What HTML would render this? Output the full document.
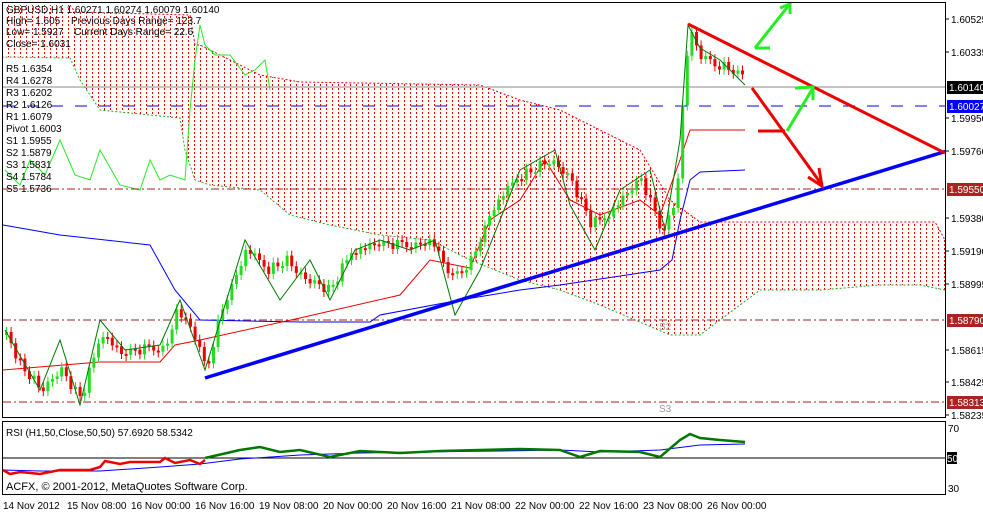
<!DOCTYPE html>
<html><head><meta charset="utf-8"><style>
html,body{margin:0;padding:0;background:#fff;width:983px;height:512px;overflow:hidden}
svg{display:block;font-family:"Liberation Sans",sans-serif}
</style></head><body>
<svg id="s" width="983" height="512" viewBox="0 0 983 512" xmlns="http://www.w3.org/2000/svg">
<defs>
<pattern id="dots" width="6" height="4" patternUnits="userSpaceOnUse"><rect x="2" y="0" width="1" height="2" fill="#e00"/></pattern>
<clipPath id="mc"><rect x="3" y="3" width="942" height="414"/></clipPath>
</defs>
<rect width="983" height="512" fill="#fff"/>
<g clip-path="url(#mc)">
<polygon fill="url(#dots)" points="0,5 70,5 75,12 190,15 195,45 200,45 260,75 300,82 480,85 520,100 560,110 600,130 640,150 670,200 700,222 935,222 945,240 945,290 920,285 880,285 820,290 760,290 700,335 670,335 600,305 560,290 520,280 470,260 430,240 380,235 330,225 290,215 260,190 210,185 195,180 185,150 180,118 100,110 80,80 70,58 0,57"/>
<polyline fill="none" stroke="#e00" stroke-width="1" stroke-dasharray="2,2" points="70,5 75,12 190,15 195,45 200,45 260,75 300,82 480,85 520,100 560,110 600,130 640,150 670,200 700,222 935,222 945,240"/>
<polyline fill="none" stroke="#2a2" stroke-width="1" stroke-dasharray="2,2" points="945,290 920,285 880,285 820,290 760,290 700,335 670,335 600,305 560,290 520,280 470,260 430,240 380,235 330,225 290,215 260,190 210,185 195,180 185,150 180,118 100,110 80,80 70,58 0,57"/>
<polyline fill="none" stroke="#2e2" stroke-width="1" points="5,170 20,185 30,160 45,175 60,140 75,175 90,180 100,150 120,185 140,190 150,160 160,180 170,175 185,180 190,110 195,60 200,25 205,45 215,55 230,55 245,75 255,70 265,60 270,90"/>
<line x1="3" y1="87" x2="945" y2="87" stroke="#888"/>
<line x1="3" y1="106" x2="945" y2="106" stroke="#00f" stroke-dasharray="12,12"/>
<line x1="3" y1="189" x2="945" y2="189" stroke="#a22" stroke-dasharray="8,3,2,3"/>
<line x1="3" y1="320" x2="945" y2="320" stroke="#a22" stroke-dasharray="8,3,2,3"/>
<line x1="3" y1="402" x2="945" y2="402" stroke="#a22" stroke-dasharray="8,3,2,3"/>
<polyline fill="none" stroke="#00f" stroke-width="1" points="3,225 60,235 150,245 175,290 200,320 300,322 370,322 380,315 460,300 520,290 560,285 660,270 672,260 680,220 690,180 700,172 745,170"/>
<polyline fill="none" stroke="#e00" stroke-width="1" points="3,370 100,362 160,362 175,345 200,340 300,318 400,295 430,260 470,268 490,220 520,200 545,160 570,200 600,215 640,200 660,215 680,160 690,130 745,130"/>
<g id="cand"></g>
<polyline fill="none" stroke="#070" stroke-width="1" points="5,330 40,390 60,340 80,405 100,320 125,350 160,345 180,300 205,370 245,240 280,300 310,260 330,300 355,250 380,240 410,250 435,240 455,315 480,270 520,170 555,150 570,205 595,250 620,190 650,170 665,230 680,140 688,25 700,48 720,60 745,85"/>
<line x1="205" y1="378" x2="960" y2="147" stroke="#00f" stroke-width="3.5"/>
<g stroke="#e00" stroke-width="3" fill="none">
<line x1="688" y1="24" x2="945" y2="153"/>
<polyline points="752,88 822,185"/><polyline points="808,177 822,186 819,168"/>
<line x1="758" y1="131" x2="785" y2="131"/>
</g>
<g stroke="#2e2" stroke-width="3" fill="none">
<polyline points="755,48 789,5"/><polyline points="780,8 790,4 790,14"/><line x1="755" y1="48" x2="770" y2="48"/>
<polyline points="787,131 813,88"/><polyline points="795,88 813,87 813,100"/>
</g>
<text x="659" y="330" font-size="10" fill="#999">S2</text>
<text x="659" y="412" font-size="10" fill="#999">S3</text>
</g>
<rect x="2.5" y="2.5" width="943" height="415" fill="none" stroke="#000"/>
<g font-size="10" fill="#000">
<text x="6" y="13">GBPUSD,H1  1.60271 1.60274 1.60079 1.60140</text>
<text x="6" y="24">High= 1.605</text><text x="71" y="24">Previous Days Range= 123.7</text>
<text x="6" y="35">Low= 1.5927</text><text x="74" y="35">Current Days Range= 22.6</text>
<text x="6" y="47">Close= 1.6031</text>
<text x="6" y="72">R5 1.6354</text><text x="6" y="84">R4 1.6278</text><text x="6" y="96">R3 1.6202</text>
<text x="6" y="108">R2 1.6126</text><text x="6" y="120">R1 1.6079</text><text x="6" y="132">Pivot 1.6003</text>
<text x="6" y="144">S1 1.5955</text><text x="6" y="156">S2 1.5879</text><text x="6" y="168">S3 1.5831</text>
<text x="6" y="180">S4 1.5784</text><text x="6" y="192">S5 1.5736</text>
</g>
<g font-size="10" fill="#000">
<g stroke="#000"><line x1="946" y1="19" x2="949" y2="19"/><line x1="946" y1="52" x2="949" y2="52"/><line x1="946" y1="118" x2="949" y2="118"/><line x1="946" y1="151" x2="949" y2="151"/><line x1="946" y1="218" x2="949" y2="218"/><line x1="946" y1="251" x2="949" y2="251"/><line x1="946" y1="284" x2="949" y2="284"/><line x1="946" y1="350" x2="949" y2="350"/><line x1="946" y1="382" x2="949" y2="382"/><line x1="946" y1="415" x2="949" y2="415"/></g>
<text x="951" y="23">1.60525</text><text x="951" y="56">1.60335</text><text x="951" y="122">1.59950</text><text x="951" y="155">1.59760</text>
<text x="951" y="222">1.59380</text><text x="951" y="255">1.59190</text><text x="951" y="288">1.58995</text><text x="951" y="354">1.58615</text>
<text x="951" y="386">1.58425</text><text x="951" y="419">1.58235</text>
<rect x="947" y="81" width="36" height="13" fill="#000"/><text x="949" y="91" fill="#fff">1.60140</text>
<rect x="947" y="100" width="36" height="13" fill="#00f"/><text x="949" y="110" fill="#fff">1.60027</text>
<rect x="947" y="183" width="36" height="13" fill="#a22"/><text x="949" y="193" fill="#fff">1.59550</text>
<rect x="947" y="314" width="36" height="13" fill="#a22"/><text x="949" y="324" fill="#fff">1.58790</text>
<rect x="947" y="396" width="36" height="13" fill="#a22"/><text x="949" y="406" fill="#fff">1.58313</text>
</g>
<rect x="2.5" y="421.5" width="943" height="73" fill="none" stroke="#000"/>
<line x1="3" y1="458" x2="945" y2="458" stroke="#000"/>
<text x="6" y="436" font-size="10">RSI (H1,50,Close,50,50) 57.6920 58.5342</text>
<text x="6" y="490" font-size="11">ACFX, © 2001-2012, MetaQuotes Software Corp.</text>
<polyline fill="none" stroke="#00f" points="3,470 40,471 100,471 160,467 200,464 240,459 300,455 360,453 420,452 500,451 560,450 600,452 660,450 700,445 745,444"/>
<polyline fill="none" stroke="#e00" stroke-width="2.5" points="3,470 10,474 20,472 40,474 60,470 90,470 100,467 105,461 120,464 130,462 160,462 165,458 175,463 190,460 200,464 205,460"/>
<polyline fill="none" stroke="#070" stroke-width="2.5" points="205,458 240,450 260,447 280,452 300,450 330,457 360,451 400,453 440,451 480,450 520,449 560,450 580,457 600,451 640,452 660,457 680,440 690,434 700,438 720,440 745,442"/>
<g font-size="10"><text x="948" y="432">70</text><rect x="947" y="452" width="10" height="12" fill="#000"/><text x="947" y="462" fill="#fff">50</text><text x="948" y="492">30</text></g>
<g font-size="10" fill="#000">
<text x="3" y="509">14 Nov 2012</text><text x="67" y="509">15 Nov 08:00</text><text x="131" y="509">16 Nov 00:00</text>
<text x="195" y="509">16 Nov 16:00</text><text x="259" y="509">19 Nov 08:00</text><text x="323" y="509">20 Nov 00:00</text>
<text x="387" y="509">20 Nov 16:00</text><text x="451" y="509">21 Nov 08:00</text><text x="515" y="509">22 Nov 00:00</text>
<text x="579" y="509">22 Nov 16:00</text><text x="643" y="509">23 Nov 08:00</text><text x="707" y="509">26 Nov 00:00</text>
</g>
</svg>
<script>
(function(){
var pts=[[5,335],[20,365],[40,390],[60,370],[80,400],[100,330],[120,355],[140,350],[165,345],[175,310],[190,330],[205,370],[220,310],[245,250],[265,270],[285,260],[305,280],[330,290],[350,250],[375,245],[400,245],[430,240],[450,280],[470,260],[490,210],[520,175],[550,160],[570,180],[590,225],[610,210],[640,180],[660,230],[675,200],[680,120],[688,30],[700,60],[720,65],[745,75]];
var g=document.getElementById('cand'),h='',prev=null;
function yAt(x){for(var i=0;i<pts.length-1;i++){if(x>=pts[i][0]&&x<=pts[i+1][0]){var t=(x-pts[i][0])/(pts[i+1][0]-pts[i][0]);return pts[i][1]+t*(pts[i+1][1]-pts[i][1]);}}return pts[pts.length-1][1];}
for(var x=5;x<=745;x+=4.6){var y=yAt(x),o=prev==null?y:prev,c=y+((Math.round(x)*7)%11-5);var up=c<o,tp=Math.min(o,c),bh=Math.max(2,Math.abs(o-c));
var col=up?'#2d2':'#e00';
h+='<line x1="'+(x+1.5)+'" y1="'+(tp-5)+'" x2="'+(x+1.5)+'" y2="'+(tp+bh+5)+'" stroke="'+col+'"/>';
h+='<rect x="'+x+'" y="'+tp+'" width="3" height="'+bh+'" fill="'+col+'"/>';prev=c;}
g.innerHTML=h;
})();
</script>
</body></html>
